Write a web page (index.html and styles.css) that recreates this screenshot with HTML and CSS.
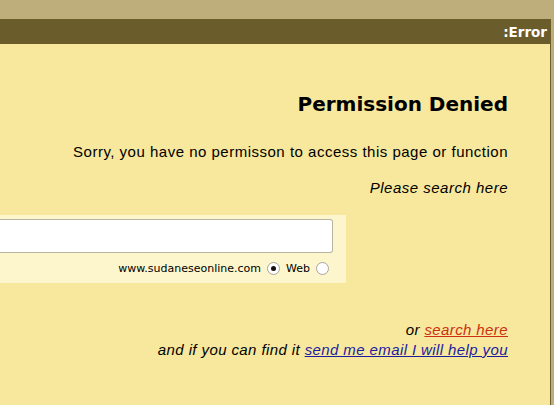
FILE: index.html
```html
<!DOCTYPE html>
<html lang="ar">
<head>
  <meta charset="UTF-8" />
  <title>Error</title>
  <link rel="stylesheet" href="styles.css">
</head>
<body>
  <div class="frame">
    <div class="title-bar">:Error</div>
    <div class="page">
      <h1>Permission Denied</h1>
      <p class="msg">Sorry, you have no permisson to access this page or function</p>
      <p class="hint">Please search here</p>

      <form class="search-box">
        <input type="text" class="search-input">
        <div class="search-opts">
          <span>www.sudaneseonline.com</span>
          <input type="radio" name="where" checked>
          <span>Web</span>
          <input type="radio" name="where">
        </div>
      </form>

      <p class="links">or <a href="#" class="red">search here</a><br>
        and if you can find it <a href="#">send me email I will help you</a></p>
    </div>
  </div>
</body>
</html>
```
FILE: styles.css
```css
* {
  margin: 0;
  padding: 0;
  box-sizing: border-box;
}
html, body {
  height: 100%;
}
body {
  background: #bdae7c;
  font-family: 'Liberation Sans', Arial, sans-serif;
  overflow: hidden;
}
.frame {
  margin-top: 19px;
  width: 551px;
  height: 386px;
  border-right: 1px solid #6b5c2c;
  display: flex;
  flex-direction: column;
}
.title-bar {
  background: #6b5c2c;
  color: #fff;
  font-family: 'DejaVu Sans', Verdana, sans-serif;
  font-weight: bold;
  font-size: 13.5px;
  height: 25px;
  line-height: 26px;
  text-align: right;
  padding-right: 3px;
}
.page {
  flex: 1;
  background: #f7e89e;
  text-align: right;
  padding-right: 42px;
}
h1 {
  font-family: 'DejaVu Sans', Verdana, sans-serif;
  font-size: 20px;
  font-weight: bold;
  margin-top: 48px;
  line-height: 24px;
}
.msg {
  font-size: 15px;
  letter-spacing: 0.5px;
  line-height: 18px;
  margin-top: 27px;
}
.hint {
  font-size: 15px;
  font-style: italic;
  letter-spacing: 0.5px;
  line-height: 18px;
  margin-top: 18px;
}
.search-box {
  width: 346px;
  margin-top: 18px;
  background: #fdf6cc;
  padding: 4px 13px 8px 0;
  display: flex;
  flex-direction: column;
}
.search-input {
  height: 34px;
  border: 1px solid #b8b3a0;
  border-left: none;
  border-radius: 0 3px 3px 0;
  background: #fff;
}
.search-opts {
  display: flex;
  justify-content: flex-end;
  align-items: center;
  gap: 6px;
  font-family: 'DejaVu Sans', Verdana, sans-serif;
  font-size: 11px;
  margin-top: 8px;
  height: 14px;
  padding-right: 4px;
}
.search-opts input {
  appearance: none;
  width: 13px;
  height: 13px;
  border: 1px solid #a8a49a;
  border-radius: 50%;
  background: #fff;
  position: relative;
}
.search-opts input:checked::after {
  content: "";
  position: absolute;
  left: 3px;
  top: 3px;
  width: 5px;
  height: 5px;
  border-radius: 50%;
  background: #111;
}
.links {
  font-size: 15px;
  font-style: italic;
  letter-spacing: 0.4px;
  margin-top: 37px;
  line-height: 20px;
}
.links a {
  color: #1c1ca0;
}
.links a.red {
  color: #cc3010;
}
```
